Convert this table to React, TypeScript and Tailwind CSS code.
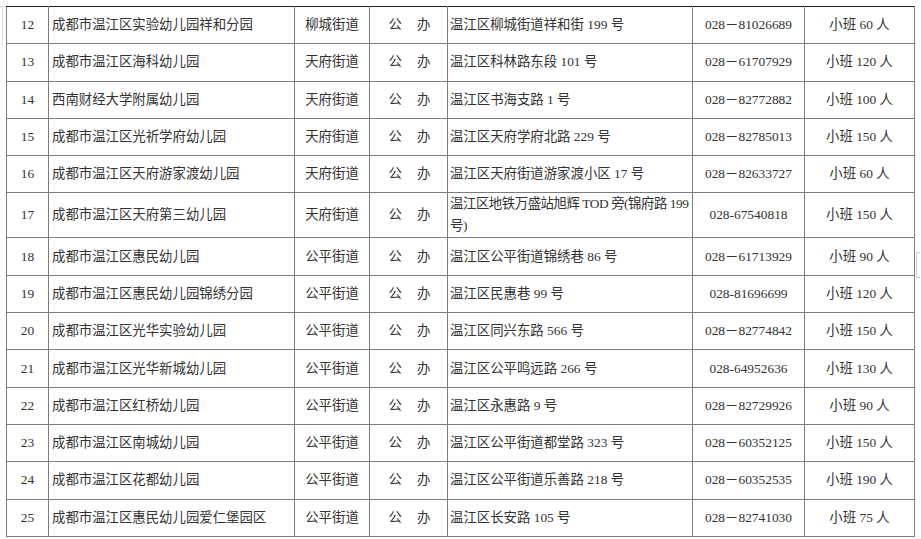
type Row = {
  no: string;
  name: string;
  street: string;
  address: string[];
  phone: string;
  size: string;
  tall?: boolean;
};

const rows: Row[] = [
  { no: "12", name: "成都市温江区实验幼儿园祥和分园", street: "柳城街道", address: ["温江区柳城街道祥和街 199 号"], phone: "028－81026689", size: "小班 60 人" },
  { no: "13", name: "成都市温江区海科幼儿园", street: "天府街道", address: ["温江区科林路东段 101 号"], phone: "028－61707929", size: "小班 120 人" },
  { no: "14", name: "西南财经大学附属幼儿园", street: "天府街道", address: ["温江区书海支路 1 号"], phone: "028－82772882", size: "小班 100 人" },
  { no: "15", name: "成都市温江区光祈学府幼儿园", street: "天府街道", address: ["温江区天府学府北路 229 号"], phone: "028－82785013", size: "小班 150 人" },
  { no: "16", name: "成都市温江区天府游家渡幼儿园", street: "天府街道", address: ["温江区天府街道游家渡小区 17 号"], phone: "028－82633727", size: "小班 60 人" },
  { no: "17", name: "成都市温江区天府第三幼儿园", street: "天府街道", address: ["温江区地铁万盛站旭辉 TOD 旁(锦府路 199", "号)"], phone: "028-67540818", size: "小班 150 人", tall: true },
  { no: "18", name: "成都市温江区惠民幼儿园", street: "公平街道", address: ["温江区公平街道锦绣巷 86 号"], phone: "028－61713929", size: "小班 90 人" },
  { no: "19", name: "成都市温江区惠民幼儿园锦绣分园", street: "公平街道", address: ["温江区民惠巷 99 号"], phone: "028-81696699", size: "小班 120 人" },
  { no: "20", name: "成都市温江区光华实验幼儿园", street: "公平街道", address: ["温江区同兴东路 566 号"], phone: "028－82774842", size: "小班 150 人" },
  { no: "21", name: "成都市温江区光华新城幼儿园", street: "公平街道", address: ["温江区公平鸣远路 266 号"], phone: "028-64952636", size: "小班 130 人" },
  { no: "22", name: "成都市温江区红桥幼儿园", street: "公平街道", address: ["温江区永惠路 9 号"], phone: "028－82729926", size: "小班 90 人" },
  { no: "23", name: "成都市温江区南城幼儿园", street: "公平街道", address: ["温江区公平街道都堂路 323 号"], phone: "028－60352125", size: "小班 150 人" },
  { no: "24", name: "成都市温江区花都幼儿园", street: "公平街道", address: ["温江区公平街道乐善路 218 号"], phone: "028－60352535", size: "小班 190 人" },
  { no: "25", name: "成都市温江区惠民幼儿园爱仁堡园区", street: "公平街道", address: ["温江区长安路 105 号"], phone: "028－82741030", size: "小班 75 人" },
];

const cell = "border-r border-b border-[#7d7d7d] align-middle whitespace-nowrap overflow-hidden";

export default function App() {
  return (
    <div
      className="relative w-[921px] h-[539px] bg-white text-[#333] text-[13.4px] leading-[22px] pl-[6px] pt-[6px] overflow-hidden"
      style={{ fontFamily: '"Liberation Serif", "Noto Sans CJK SC", serif' }}
    >
      {/* faint page marks at the edges */}
      <div className="absolute left-0 top-[6px] w-[5px] border-t border-[#d4d4d4]" />
      <div className="absolute left-[2px] top-[8px] h-[38px] border-l border-[#dcdcdc]" />
      <div className="absolute right-[1px] top-[252px] h-[26px] w-[4px] border-l border-t border-b border-[#cfcfcf]" />

      <table className="table-fixed border-collapse border-l border-l-[#7d7d7d] border-t-[1.5px] border-t-[#222] border-b-[1.5px] border-b-[#222] w-[908px]">
        <colgroup>
          <col className="w-[42px]" />
          <col className="w-[246px]" />
          <col className="w-[75px]" />
          <col className="w-[78px]" />
          <col className="w-[245px]" />
          <col className="w-[112px]" />
          <col className="w-[110px]" />
        </colgroup>
        <tbody>
          {rows.map((r) => (
            <tr key={r.no} className={r.tall ? "h-[43px]" : "h-[37.3px]"}>
              <td className={`${cell} text-center`}>{r.no}</td>
              <td className={`${cell} text-left pl-[3px]`}>{r.name}</td>
              <td className={`${cell} text-center`}>{r.street}</td>
              <td className={`${cell} text-center`}>
                <span className="inline-flex gap-[15px] pl-[2px]">
                  <span>公</span>
                  <span>办</span>
                </span>
              </td>
              <td className={`${cell} text-left pl-[2px]`}>
                {r.address.map((line, i) => (
                  <div key={i} className={r.tall ? "tracking-[-0.45px]" : ""}>
                    {line}
                  </div>
                ))}
              </td>
              <td className={`${cell} text-center`}>{r.phone}</td>
              <td className={`${cell} text-center`}>{r.size}</td>
            </tr>
          ))}
        </tbody>
      </table>
    </div>
  );
}
